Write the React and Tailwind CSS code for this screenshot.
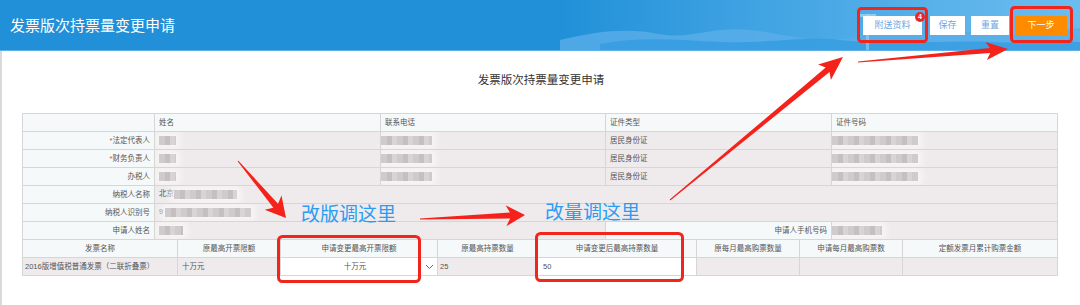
import React from 'react'

const font = "font-['Liberation_Sans','Noto_Sans_CJK_SC',sans-serif]"

// arrow polygon: tail -> tip, tapered shaft + barbed head
function arrow(x0, y0, x1, y1, hl, hw, sw0, sw1) {
  const dx = x1 - x0, dy = y1 - y0, len = Math.hypot(dx, dy)
  const ux = dx / len, uy = dy / len, nx = -uy, ny = ux
  const bx = x1 - ux * hl, by = y1 - uy * hl
  const ix = bx + ux * 4, iy = by + uy * 4
  const pts = [
    [x0 + nx * sw0 / 2, y0 + ny * sw0 / 2],
    [ix + nx * sw1 / 2, iy + ny * sw1 / 2],
    [bx + nx * hw, by + ny * hw],
    [x1, y1],
    [bx - nx * hw, by - ny * hw],
    [ix - nx * sw1 / 2, iy - ny * sw1 / 2],
    [x0 - nx * sw0 / 2, y0 - ny * sw0 / 2],
  ]
  return pts.map(p => p.map(v => v.toFixed(1)).join(',')).join(' ')
}

function Blur({ w }) {
  return (
    <span
      className="inline-block h-[9px] align-middle bg-[repeating-linear-gradient(90deg,#cfcbcc_0px,#cfcbcc_6px,#c4c0c1_6px,#c4c0c1_11px,#d8d4d5_11px,#d8d4d5_16px)] blur-[0.6px] shadow-[0_0_6px_4px_rgba(250,248,248,0.8)]"
      style={{ width: w }}
    />
  )
}

const td = 'border border-[#d6d6d6] px-[4px] leading-none whitespace-nowrap overflow-hidden'
const lab = `${td} bg-[#f6f9fa] text-right`
const val = `${td} bg-[#efebec]`
const head = `${td} bg-[#f6f9fa]`

export default function App() {
  return (
    <div className={`relative w-[1080px] h-[305px] overflow-hidden bg-white ${font}`}>
      {/* header */}
      <div className="relative h-[51px] bg-[#2190d8] border-b border-[#5fb2e8] flex items-center overflow-hidden">
        <svg className="absolute right-0 top-0" width="520" height="51" viewBox="0 0 520 51">
          <defs>
            <linearGradient id="sky" x1="0" x2="1" y1="0" y2="0">
              <stop offset="0" stopColor="#2190d8" />
              <stop offset="0.35" stopColor="#3ea2e2" />
              <stop offset="1" stopColor="#6cbdef" />
            </linearGradient>
          </defs>
          <rect width="520" height="51" fill="url(#sky)" />
          <path d="M0 40 C40 30 70 28 100 34 C130 40 150 26 190 30 C230 34 250 44 290 38 C330 30 360 22 400 30 C440 38 470 34 520 28 L520 51 L0 51 Z" fill="#5aaee8" opacity="0.8" />
          <path d="M40 44 C80 36 120 40 160 42 C210 44 240 36 280 40 C330 46 380 40 430 42 C470 44 500 40 520 42 L520 51 L40 51 Z" fill="#2f9ae0" opacity="0.7" />
          <rect x="300" y="14" width="16" height="3" fill="#a9d6f4" opacity="0.7" />
          <rect x="306" y="14" width="3" height="37" fill="#a9d6f4" opacity="0.5" />
        </svg>
        <div className="relative pl-[10px] text-[15px] leading-none text-white">发票版次持票量变更申请</div>
        <div className="relative ml-auto mr-[13px] flex items-center text-[9px] leading-none">
          <button className="relative w-[59px] h-[19px] bg-white text-[#6ea7e0]">
            附送资料
            <span className="absolute -top-[4px] -right-[3px] w-[10px] h-[10px] rounded-full bg-[#e8272b] text-white text-[7px] font-bold flex items-center justify-center">4</span>
          </button>
          <button className="ml-[8px] w-[35px] h-[19px] bg-white text-[#6ea7e0]">保存</button>
          <button className="ml-[6px] w-[38px] h-[19px] bg-white text-[#6ea7e0]">重置</button>
          <button className="ml-[6px] w-[52px] h-[19px] bg-[#ff8c00] text-white">下一步</button>
        </div>
      </div>

      {/* body */}
      <div className="h-[254px] border-l-2 border-[#dadada]">
        <div className="pt-[21px] pb-[25px] text-center text-[11.5px] leading-[16px] text-[#333]">发票版次持票量变更申请</div>

        <div className="ml-[20px] text-[7.5px] text-[#555]">
          <table className="w-[1035px] table-fixed border-collapse">
            <colgroup>
              <col className="w-[132px]" />
              <col className="w-[226px]" />
              <col className="w-[225px]" />
              <col className="w-[226px]" />
              <col className="w-[226px]" />
            </colgroup>
            <tbody>
              <tr className="h-[18px]">
                <td className={head}></td>
                <td className={head}>姓名</td>
                <td className={head}>联系电话</td>
                <td className={head}>证件类型</td>
                <td className={head}>证件号码</td>
              </tr>
              {['法定代表人', '财务负责人', '办税人'].map((n, i) => (
                <tr key={n} className="h-[18px]">
                  <td className={lab}>{i < 2 && <span className="text-[#e43]">*</span>}{n}</td>
                  <td className={val}><Blur w={17} /></td>
                  <td className={`${val} !px-0`}><Blur w={51} /></td>
                  <td className={val}>居民身份证</td>
                  <td className={`${val} !px-0`}><Blur w={86} /></td>
                </tr>
              ))}
              <tr className="h-[18px]">
                <td className={lab}>纳税人名称</td>
                <td className={val} colSpan={4}>北京<Blur w={63} /></td>
              </tr>
              <tr className="h-[18px]">
                <td className={lab}>纳税人识别号</td>
                <td className={val} colSpan={4}>9 <Blur w={86} /></td>
              </tr>
              <tr className="h-[18px]">
                <td className={lab}>申请人姓名</td>
                <td className={val} colSpan={2}><Blur w={24} /></td>
                <td className={lab}>申请人手机号码</td>
                <td className={`${val} !px-0`}><Blur w={50} /></td>
              </tr>
            </tbody>
          </table>

          <table className="w-[1035px] table-fixed border-collapse -mt-px">
            <colgroup>
              <col className="w-[155px]" />
              <col className="w-[103px]" />
              <col className="w-[157px]" />
              <col className="w-[100px]" />
              <col className="w-[159px]" />
              <col className="w-[103px]" />
              <col className="w-[103px]" />
              <col className="w-[155px]" />
            </colgroup>
            <tbody>
              <tr className="h-[18px] text-center">
                <td className={head}>发票名称</td>
                <td className={head}>原最高开票限额</td>
                <td className={head}>申请变更最高开票限额</td>
                <td className={head}>原最高持票数量</td>
                <td className={head}>申请变更后最高持票数量</td>
                <td className={head}>原每月最高购票数量</td>
                <td className={head}>申请每月最高购票数</td>
                <td className={head}>定额发票月累计购票金额</td>
              </tr>
              <tr className="h-[18px]">
                <td className={`${val} !px-[2px]`}>2016版增值税普通发票（二联折叠票）</td>
                <td className={val}>十万元</td>
                <td className={`${td} bg-white !pr-[3px]`}>
                  <div className="flex items-center">
                    <span className="flex-1 text-center">十万元</span>
                    <svg width="9" height="6" viewBox="0 0 9 6"><path d="M1 1 L4.5 4.5 L8 1" fill="none" stroke="#666" strokeWidth="1" /></svg>
                  </div>
                </td>
                <td className={`${val} !px-[2px]`}>25</td>
                <td className={`${td} bg-white !px-[5px]`}>50</td>
                <td className={val}></td>
                <td className={val}></td>
                <td className={val}></td>
              </tr>
            </tbody>
          </table>
        </div>
      </div>

      {/* annotations */}
      <div className="pointer-events-none absolute left-[301px] top-[202px] text-[19px] leading-[26px] text-[#2b9cf2]">改版调这里</div>
      <div className="pointer-events-none absolute left-[545px] top-[200px] text-[19px] leading-[26px] text-[#2b9cf2]">改量调这里</div>
      <svg className="pointer-events-none absolute left-0 top-0" width="1080" height="305" viewBox="0 0 1080 305">
        <g fill="none" stroke="#f0251c" strokeWidth="3">
          <rect x="858.5" y="8.5" width="68" height="33" rx="3" />
          <rect x="1011.5" y="7.5" width="60" height="34" rx="3" />
          <rect x="278.5" y="236.5" width="141" height="45" rx="4" />
          <rect x="536.5" y="233.5" width="146" height="47" rx="4" />
        </g>
        <g fill="#f4221a">
          <polygon points={arrow(238, 161, 286, 218, 20, 11, 1, 6)} />
          <polygon points={arrow(420, 219, 525, 215, 19, 10.5, 1, 6)} />
          <polygon points={arrow(670, 200, 843, 57, 24, 10, 1, 6)} />
          <polygon points={arrow(858, 62, 1008, 49, 22, 9, 1, 5)} />
        </g>
      </svg>
    </div>
  )
}
